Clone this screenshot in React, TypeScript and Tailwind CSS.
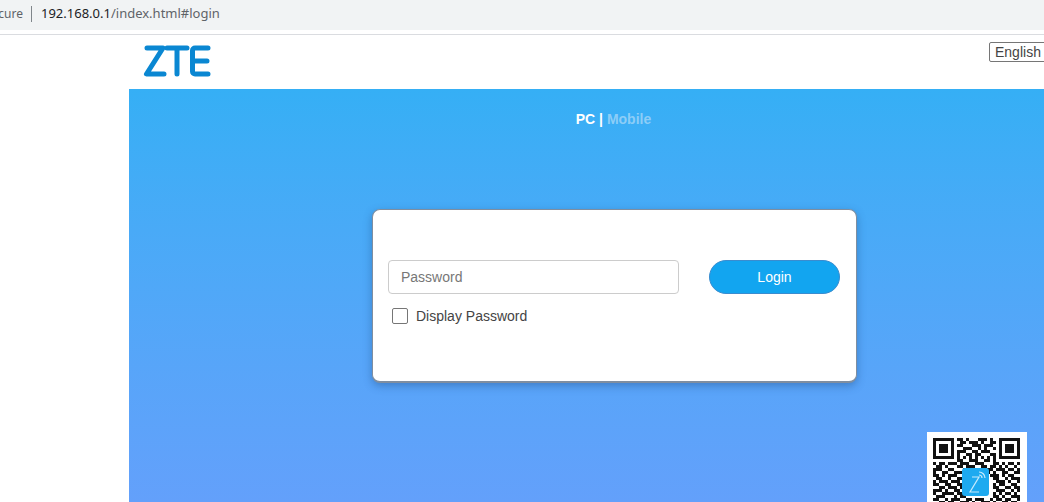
const qrRows = [
  '11111110110100011101001111111',
  '10000010011011101001101000001',
  '10111010110001110111001011101',
  '10111010001110010100101011101',
  '10111010111001101110001011101',
  '10000010100110110001101000001',
  '11111110101010101010101111111',
  '00000000110011100110100000000',
  '10110111011100111000110101101',
  '01101000110111001101101010010',
  '11100110001101110011011101101',
  '10011001110001101110100110011',
  '11010111001110011001110101100',
  '01100100110000000000110010111',
  '10111011100000000000011101001',
  '11001100111000000000101100110',
  '00110111010000000000110011011',
  '11101001100000000000011100101',
  '10011110110000000000101011010',
  '01110001011000000000110100111',
  '11001011100110111001011011001',
  '00110110011101001110100110110',
  '10101001110010110011101001011',
  '11010110001101001100011110100',
];

function ZteLogo() {
  return (
    <svg width="68" height="34" viewBox="0 0 68 34" fill="none" stroke="#0a87d2" strokeWidth="5" strokeLinejoin="round" strokeLinecap="round">
      <path d="M4 4h16L3.500 30H21" />
      <path d="M24 4h20M34 4v26" />
      <path d="M65 4H52a2.500 2.500 0 0 0-2.500 2.500v21A2.500 2.500 0 0 0 52 30h13M50 17h14" />
    </svg>
  );
}

function QrCode() {
  return (
    <div className="relative mt-[49px] mr-[73px] self-end w-[100px] h-[100px] bg-white p-[6px]">
      <svg className="blur-[0.5px]" width="87" height="72" viewBox="0 0 29 24" shapeRendering="crispEdges">
        {qrRows.map((row, y) =>
          row.split('').map((cell, x) =>
            cell === '1' ? <rect key={`${x}-${y}`} x={x} y={y} width="1" height="1" fill="#111" /> : null,
          ),
        )}
      </svg>
      <div className="absolute left-[35px] top-[36px] w-[27px] h-[28px] rounded-[3px] bg-[#1eaaf0] flex items-center justify-center">
        <svg width="24" height="26" viewBox="0 0 24 26" fill="none" stroke="#c6eafc" strokeWidth="1.2">
          <path d="M8 8h7L6 23h9" />
          <path d="M15 6a3 3 0 0 1 3 3M15 3a6 6 0 0 1 6 6" />
        </svg>
      </div>
    </div>
  );
}

export default function App() {
  return (
    <div className="w-[1044px] h-[502px] overflow-hidden bg-white font-['Liberation_Sans',sans-serif] flex flex-col">
      <div className="h-[30px] shrink-0 bg-[#f1f3f4] pb-[3px] flex items-center font-['Noto_Sans',sans-serif] text-[13px] text-[#5f6368]">
        <span className="w-[23px] overflow-hidden flex justify-end shrink-0 text-[12px]">cure</span>
        <div className="w-px h-4 bg-[#80868b] ml-[8px] mr-[9px]" />
        <span className="whitespace-nowrap">
          <span className="text-[#202124]">192.168.0.1</span>/index.html#login
        </span>
      </div>
      <div className="h-[4px] shrink-0 bg-white" />
      <div className="h-px shrink-0 bg-[#dadce0]" />

      <header className="h-[54px] shrink-0 flex justify-between items-start">
        <div className="ml-[143px] mt-[9px]">
          <ZteLogo />
        </div>
        <div className="mt-[7px] -mr-[12px] w-[67px] h-[20px] shrink-0 border border-[#767676] rounded-[2px] pl-[5px] text-sm leading-[19px] text-[#444]">
          English
        </div>
      </header>

      <main className="ml-[129px] w-[971px] shrink-0 h-[413px] flex flex-col bg-gradient-to-b from-[#35aff5] to-[#63a0fb]">
        <p className="mt-[22px] h-4 text-center text-sm leading-4 font-bold text-white -translate-x-px">
          PC | <span className="text-[#8ccdf7]">Mobile</span>
        </p>
        <section className="mt-[82px] ml-[243px] w-[485px] h-[174px] shrink-0 bg-white rounded-[8px] border border-[#7f8ea0] border-b-2 shadow-[0_3px_8px_rgba(30,80,140,0.45)] pl-[15px] pr-[16px] pt-[50px]">
          <div className="flex justify-between">
            <div className="w-[291px] h-[34px] border border-[#ccc] rounded-[4px] pl-3 text-sm leading-8 text-[#777]">Password</div>
            <button className="w-[131px] h-[34px] rounded-full bg-[#12a5f0] border border-[#3a8ccf] text-sm text-white">Login</button>
          </div>
          <label className="mt-[12px] ml-1 flex items-center gap-2 text-sm text-[#444]">
            <span className="w-4 h-4 rounded-[2px] border border-[#767676] bg-white" />
            Display Password
          </label>
        </section>
        <QrCode />
      </main>
    </div>
  );
}
